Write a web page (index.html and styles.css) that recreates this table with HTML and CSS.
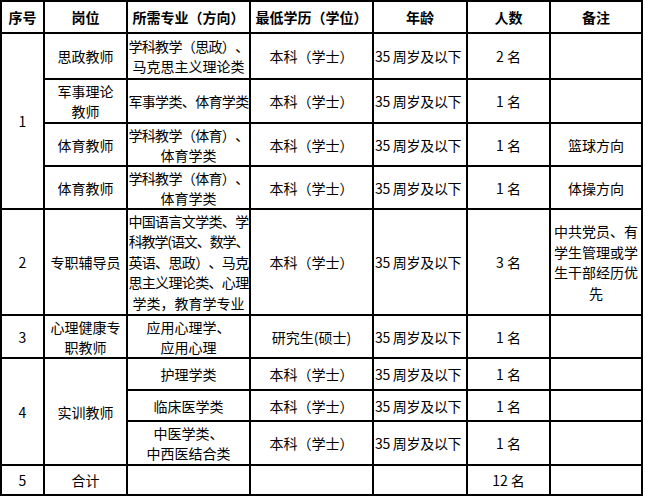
FILE: index.html
```html
<!DOCTYPE html>
<html lang="zh-CN">
<head>
<meta charset="utf-8">
<title>岗位需求表</title>
<link rel="stylesheet" href="styles.css">
</head>
<body>
<table class="grid">
  <colgroup>
    <col class="c-no">
    <col class="c-post">
    <col class="c-major">
    <col class="c-degree">
    <col class="c-age">
    <col class="c-count">
    <col class="c-note">
  </colgroup>
  <thead>
    <tr class="r-head">
      <th>序号</th>
      <th>岗位</th>
      <th>所需专业（方向）</th>
      <th>最低学历（学位）</th>
      <th>年龄</th>
      <th>人数</th>
      <th>备注</th>
    </tr>
  </thead>
  <tbody>
    <tr class="r-46">
      <td rowspan="4">1</td>
      <td>思政教师</td>
      <td><span class="ln tight">学科教学（思政）、</span><span class="ln">马克思主义理论类</span></td>
      <td>本科（学士）</td>
      <td class="age">35 周岁及以下</td>
      <td>2 名</td>
      <td></td>
    </tr>
    <tr class="r-44">
      <td><span class="ln">军事理论</span><span class="ln">教师</span></td>
      <td><span class="ln tight">军事学类、体育学类</span></td>
      <td>本科（学士）</td>
      <td class="age">35 周岁及以下</td>
      <td>1 名</td>
      <td></td>
    </tr>
    <tr class="r-43">
      <td>体育教师</td>
      <td><span class="ln tight">学科教学（体育）、</span><span class="ln">体育学类</span></td>
      <td>本科（学士）</td>
      <td class="age">35 周岁及以下</td>
      <td>1 名</td>
      <td>篮球方向</td>
    </tr>
    <tr class="r-43">
      <td>体育教师</td>
      <td><span class="ln tight">学科教学（体育）、</span><span class="ln">体育学类</span></td>
      <td>本科（学士）</td>
      <td class="age">35 周岁及以下</td>
      <td>1 名</td>
      <td>体操方向</td>
    </tr>
    <tr class="r-106">
      <td>2</td>
      <td>专职辅导员</td>
      <td class="dense">
        <span class="ln tight">中国语言文学类、学</span>
        <span class="ln tighter">科教学(语文、数学、</span>
        <span class="ln tight">英语、思政）、马克</span>
        <span class="ln tight">思主义理论类、心理</span>
        <span class="ln">学类，教育学专业</span>
      </td>
      <td>本科（学士）</td>
      <td class="age">35 周岁及以下</td>
      <td>3 名</td>
      <td class="dense">
        <span class="ln">中共党员、有</span>
        <span class="ln">学生管理或学</span>
        <span class="ln">生干部经历优</span>
        <span class="ln">先</span>
      </td>
    </tr>
    <tr class="r-43">
      <td>3</td>
      <td><span class="ln">心理健康专</span><span class="ln">职教师</span></td>
      <td><span class="ln">应用心理学、</span><span class="ln">应用心理</span></td>
      <td>研究生(硕士)</td>
      <td class="age">35 周岁及以下</td>
      <td>1 名</td>
      <td></td>
    </tr>
    <tr class="r-32">
      <td rowspan="3">4</td>
      <td rowspan="3">实训教师</td>
      <td>护理学类</td>
      <td>本科（学士）</td>
      <td class="age">35 周岁及以下</td>
      <td>1 名</td>
      <td></td>
    </tr>
    <tr class="r-31">
      <td>临床医学类</td>
      <td>本科（学士）</td>
      <td class="age">35 周岁及以下</td>
      <td>1 名</td>
      <td></td>
    </tr>
    <tr class="r-44">
      <td><span class="ln">中医学类、</span><span class="ln">中西医结合类</span></td>
      <td>本科（学士）</td>
      <td class="age">35 周岁及以下</td>
      <td>1 名</td>
      <td></td>
    </tr>
    <tr class="r-30">
      <td>5</td>
      <td>合计</td>
      <td></td>
      <td></td>
      <td></td>
      <td>12 名</td>
      <td></td>
    </tr>
  </tbody>
</table>
</body>
</html>
```

FILE: styles.css
```css
html, body {
  margin: 0;
  padding: 0;
  background: #ffffff;
}

.grid {
  border-collapse: collapse;
  table-layout: fixed;
  width: 643px;
  font-family: "Noto Sans CJK SC", "Noto Sans", sans-serif;
  font-size: 14px;
  line-height: 20px;
  color: #000;
  text-spacing-trim: space-all;
  font-feature-settings: "chws" 0, "halt" 0;
}

.c-no { width: 43px; }
.c-post { width: 83px; }
.c-major { width: 123px; }
.c-degree { width: 123px; }
.c-age { width: 94px; }
.c-count { width: 83px; }
.c-note { width: 92px; }

.grid th,
.grid td {
  border: 2px solid #000;
  padding: 0;
  text-align: center;
  vertical-align: middle;
  overflow: hidden;
}

.grid th {
  font-weight: 700;
  font-size: 14px;
}

.r-head { height: 32px; }
.r-46 { height: 46px; }
.r-44 { height: 44px; }
.r-43 { height: 43px; }
.r-106 { height: 106px; }
.r-32 { height: 32px; }
.r-31 { height: 31px; }
.r-30 { height: 30px; }

.ln {
  display: block;
  white-space: nowrap;
}

.tight {
  letter-spacing: -0.65px;
}

.tighter {
  letter-spacing: -1.1px;
}

.dense {
  line-height: 20.5px;
}

.grid td.age {
  white-space: nowrap;
  letter-spacing: -0.3px;
  text-align: left;
  padding-left: 1px;
}
```
